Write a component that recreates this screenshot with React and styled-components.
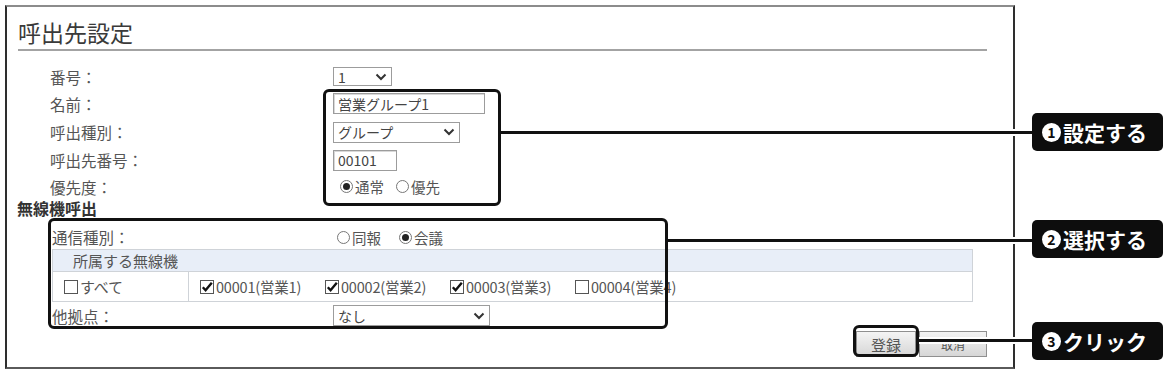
import React from "react";
import styled, { createGlobalStyle } from "styled-components";

const GlobalStyle = createGlobalStyle`
  html, body {
    margin: 0;
    padding: 0;
    background: #fff;
  }
  body {
    font-family: "Noto Sans CJK JP", "Noto Sans", sans-serif;
    color: #4a4a4a;
  }
`;

const Page = styled.div`
  position: relative;
  width: 1170px;
  height: 373px;
  overflow: hidden;
  background: #fff;
`;

const Panel = styled.div`
  box-sizing: border-box;
  width: 1010px;
  height: 364px;
  margin: 5px 0 0 5px;
  border: 2px solid #2e2e2e;
  border-top-color: #8c8c8c;
  border-bottom-color: #5a5a5a;
  display: flex;
  flex-direction: column;
`;

const Title = styled.h1`
  margin: 10px 26px 0 11px;
  padding-bottom: 1px;
  font-size: 23px;
  font-weight: normal;
  line-height: 31px;
  color: #3a3a3a;
  border-bottom: 2px solid #a3a3a3;
`;

const FieldGroup = styled.div`
  margin-top: ${(p) => p.$top || 0}px;
  display: flex;
  flex-direction: column;
`;

const Field = styled.div`
  display: grid;
  grid-template-columns: ${(p) => p.$label}px auto;
  align-items: center;
  height: ${(p) => p.$h}px;
  padding-left: ${(p) => p.$indent}px;
`;

const Label = styled.span`
  font-size: 15.5px;
  color: #555;
  white-space: nowrap;
`;

const Controls = styled.div`
  display: flex;
  align-items: center;
  font-size: 14px;
  color: #444;
`;

const SelectBox = styled.div`
  box-sizing: border-box;
  width: ${(p) => p.$w}px;
  height: ${(p) => p.$h || 20}px;
  border: 1px solid #9c9c9c;
  padding: 0 4px;
  display: flex;
  align-items: center;
  justify-content: space-between;
  font-size: 14px;
  color: #444;
  background: #fff;
`;

const TextBox = styled.div`
  box-sizing: border-box;
  width: ${(p) => p.$w}px;
  height: 21px;
  border: 1px solid #9c9c9c;
  box-shadow: inset 1px 1px 0 #d8d8d8;
  padding: 0 4px;
  display: flex;
  align-items: center;
  font-size: 14px;
  color: #444;
`;

const Option = styled.label`
  display: flex;
  align-items: center;
  gap: 2px;
  margin-left: ${(p) => p.$ml || 0}px;
  font-size: 14.5px;
  color: #555;
`;

const Radio = styled.span`
  box-sizing: border-box;
  width: 13px;
  height: 13px;
  border-radius: 50%;
  border: 1px solid #777;
  display: flex;
  align-items: center;
  justify-content: center;
  &::after {
    content: "";
    width: 7px;
    height: 7px;
    border-radius: 50%;
    background: ${(p) => (p.$on ? "#222" : "transparent")};
  }
`;

const Box = styled.span`
  box-sizing: border-box;
  width: 14px;
  height: 14px;
  border: 1px solid #555;
  display: flex;
  align-items: center;
  justify-content: center;
  background: #fff;
  flex: none;
`;

const SectionHead = styled.div`
  margin-left: 10px;
  height: 16px;
  line-height: 16px;
  font-size: 16px;
  font-weight: bold;
  color: #333;
`;

const MemberTable = styled.table`
  margin-left: 45px;
  width: 921px;
  table-layout: fixed;
  border-collapse: collapse;
  font-size: 14px;
  color: #555;
  th,
  td {
    border: 1px solid #cfd3d8;
    padding: 0;
  }
`;

const Col = styled.col`
  width: ${(p) => (p.$w ? `${p.$w}px` : "auto")};
`;

const HeadCell = styled.th`
  height: 18px;
  background: #e8eef8;
  text-align: left;
  font-weight: normal;
  font-size: 15px;
  padding-left: 20px !important;
`;

const Cell = styled.td`
  height: 29px;
  padding-left: ${(p) => p.$pl}px !important;
`;

const CheckRow = styled.div`
  display: flex;
  align-items: center;
`;

const CheckItem = styled.label`
  display: flex;
  align-items: center;
  gap: 2px;
  width: ${(p) => p.$w || 125}px;
  font-size: ${(p) => p.$fs || 14.5}px;
  letter-spacing: -0.2px;
  color: #555;
  white-space: nowrap;
`;

const ButtonRow = styled.div`
  display: flex;
  justify-content: flex-end;
  gap: 3px;
  margin: 2px 26px 0 0;
`;

const Button = styled.button`
  box-sizing: border-box;
  width: ${(p) => p.$w}px;
  height: 26px;
  border: 1px solid #8f8f8f;
  background: linear-gradient(#f4f4f4, #d6d6d6);
  font-family: inherit;
  font-size: ${(p) => p.$fs || 15}px;
  color: #555;
  padding: 0;
`;

/* annotations drawn over the form */
const Frame = styled.div`
  position: absolute;
  left: ${(p) => p.$x}px;
  top: ${(p) => p.$y}px;
  width: ${(p) => p.$w}px;
  height: ${(p) => p.$h}px;
  box-sizing: border-box;
  border: 3px solid #111;
  border-radius: 6px;
  pointer-events: none;
`;

const Leader = styled.div`
  position: absolute;
  left: ${(p) => p.$x}px;
  top: ${(p) => p.$y}px;
  width: ${(p) => p.$w}px;
  height: 3px;
  background: #111;
  box-shadow: 0 0 0 2px #fff;
`;

const Callout = styled.div`
  position: absolute;
  left: 1032px;
  top: ${(p) => p.$y}px;
  width: 131px;
  height: 38px;
  box-sizing: border-box;
  padding-left: 10px;
  background: #0d0d0d;
  border-radius: 5px;
  display: flex;
  align-items: center;
  gap: 2px;
  color: #fff;
  font-size: 21px;
  font-weight: bold;
  white-space: nowrap;
`;

const Num = styled.span`
  width: 19px;
  height: 19px;
  border-radius: 50%;
  background: #fff;
  color: #0d0d0d;
  font-size: 14px;
  font-weight: bold;
  display: flex;
  align-items: center;
  justify-content: center;
  flex: none;
`;

const Chevron = () => (
  <svg width="12" height="8" viewBox="0 0 12 8">
    <polyline points="1.5,1.5 6,6 10.5,1.5" fill="none" stroke="#333" strokeWidth="2" />
  </svg>
);

const Tick = () => (
  <svg width="12" height="12" viewBox="0 0 12 12">
    <path d="M1.8 6.2 L4.6 9.2 L10.8 1.8" fill="none" stroke="#111" strokeWidth="2.4" />
  </svg>
);

const Check = ({ on, children, w, fs }) => (
  <CheckItem $w={w} $fs={fs}>
    <Box>{on && <Tick />}</Box>
    {children}
  </CheckItem>
);

const members = [
  { id: "00001", name: "営業1", on: true },
  { id: "00002", name: "営業2", on: true },
  { id: "00003", name: "営業3", on: true },
  { id: "00004", name: "営業4", on: false },
];

const App = () => {
  return (
    <Page>
      <GlobalStyle />
      <Panel>
        <Title>呼出先設定</Title>

        <FieldGroup $top={12}>
          <Field $indent={43} $label={283} $h={27}>
            <Label>番号：</Label>
            <Controls>
              <SelectBox $w={59} $h={19}>
                1 <Chevron />
              </SelectBox>
            </Controls>
          </Field>
          <Field $indent={43} $label={283} $h={27}>
            <Label>名前：</Label>
            <Controls>
              <TextBox $w={152}>営業グループ1</TextBox>
            </Controls>
          </Field>
          <Field $indent={43} $label={283} $h={30}>
            <Label>呼出種別：</Label>
            <Controls>
              <SelectBox $w={127} $h={21}>
                グループ <Chevron />
              </SelectBox>
            </Controls>
          </Field>
          <Field $indent={43} $label={283} $h={26}>
            <Label>呼出先番号：</Label>
            <Controls>
              <TextBox $w={64}>00101</TextBox>
            </Controls>
          </Field>
          <Field $indent={43} $label={283} $h={27}>
            <Label>優先度：</Label>
            <Controls>
              <Option $ml={7}>
                <Radio $on />
                通常
              </Option>
              <Option $ml={12}>
                <Radio />
                優先
              </Option>
            </Controls>
          </Field>
        </FieldGroup>

        <SectionHead>無線機呼出</SectionHead>

        <FieldGroup $top={9}>
          <Field $indent={45} $label={281} $h={24}>
            <Label>通信種別：</Label>
            <Controls>
              <Option $ml={4}>
                <Radio />
                同報
              </Option>
              <Option $ml={18}>
                <Radio $on />
                会議
              </Option>
            </Controls>
          </Field>

          <MemberTable>
            <colgroup>
              <Col $w={136} />
              <Col />
            </colgroup>
            <tbody>
              <tr>
                <HeadCell colSpan={2}>所属する無線機</HeadCell>
              </tr>
              <tr>
                <Cell $pl={11}>
                  <CheckRow>
                    <Check w={110} fs={15}>
                      すべて
                    </Check>
                  </CheckRow>
                </Cell>
                <Cell $pl={11}>
                  <CheckRow>
                    {members.map((m) => (
                      <Check key={m.id} on={m.on}>
                        {m.id}({m.name})
                      </Check>
                    ))}
                  </CheckRow>
                </Cell>
              </tr>
            </tbody>
          </MemberTable>

          <Field $indent={45} $label={281} $h={27}>
            <Label>他拠点：</Label>
            <Controls>
              <SelectBox $w={157} $h={21}>
                なし <Chevron />
              </SelectBox>
            </Controls>
          </Field>
        </FieldGroup>

        <ButtonRow>
          <Button $w={60}>登録</Button>
          <Button $w={68} $fs={12}>
            取消
          </Button>
        </ButtonRow>
      </Panel>

      <Leader $x={500} $y={131} $w={532} />
      <Leader $x={667} $y={239} $w={365} />
      <Leader $x={919} $y={339} $w={113} />

      <Frame $x={323} $y={89} $w={178} $h={117} />
      <Frame $x={48} $y={218} $w={620} $h={111} />
      <Frame $x={853} $y={325} $w={66} $h={32} />

      <Callout $y={113}>
        <Num>1</Num>設定する
      </Callout>
      <Callout $y={220}>
        <Num>2</Num>選択する
      </Callout>
      <Callout $y={322}>
        <Num>3</Num>クリック
      </Callout>
    </Page>
  );
};

export default App;
